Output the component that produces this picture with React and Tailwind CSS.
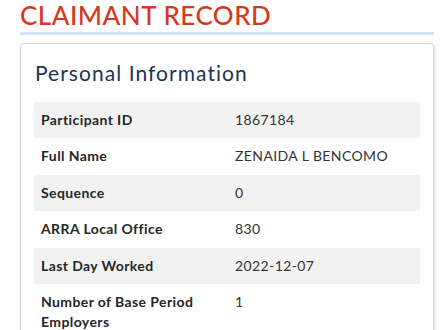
export default function App() {
  const rows = [
    ["Participant ID", "1867184"],
    ["Full Name", "ZENAIDA L BENCOMO"],
    ["Sequence", "0"],
    ["ARRA Local Office", "830"],
    ["Last Day Worked", "2022-12-07"],
    ["Number of Base Period Employers", "1"],
  ];
  return (
    <div className="w-[442px] h-[330px] overflow-hidden bg-white" style={{ fontFamily: "Lato, 'Open Sans', sans-serif" }}>
      <div className="pl-[20px] pr-[8px]">
        <h1 className="text-[26px] leading-[30px] text-[#d6381c] font-medium tracking-[0.5px]">CLAIMANT RECORD</h1>
        <div className="mt-[2px] h-[3px] bg-[#d5e3f5]"></div>
        <div className="mt-[8px] border border-[#d4d4d4] rounded-[4px] shadow-[1px_1px_3px_rgba(0,0,0,0.12)] px-[13px] pt-[14px] pb-4">
          <h2 className="text-[21px] leading-[29px] text-[#1c3356] tracking-[1.05px] ml-[1px]">Personal Information</h2>
          <div className="mt-[15px]">
            {rows.map(([k, v], i) => (
              <div key={k} className={`grid grid-cols-2 ${i % 2 === 0 ? "bg-[#f2f2f2]" : "bg-white"}`}>
                <div className="px-[7px] py-[8px] text-[14px] leading-[20.4px] font-bold tracking-[0.4px] text-[#262626]">{k}</div>
                <div className="px-[8px] py-[8px] text-[14px] leading-[20.4px] tracking-[0.4px] text-[#333333]">{v}</div>
              </div>
            ))}
          </div>
        </div>
      </div>
    </div>
  );
}
